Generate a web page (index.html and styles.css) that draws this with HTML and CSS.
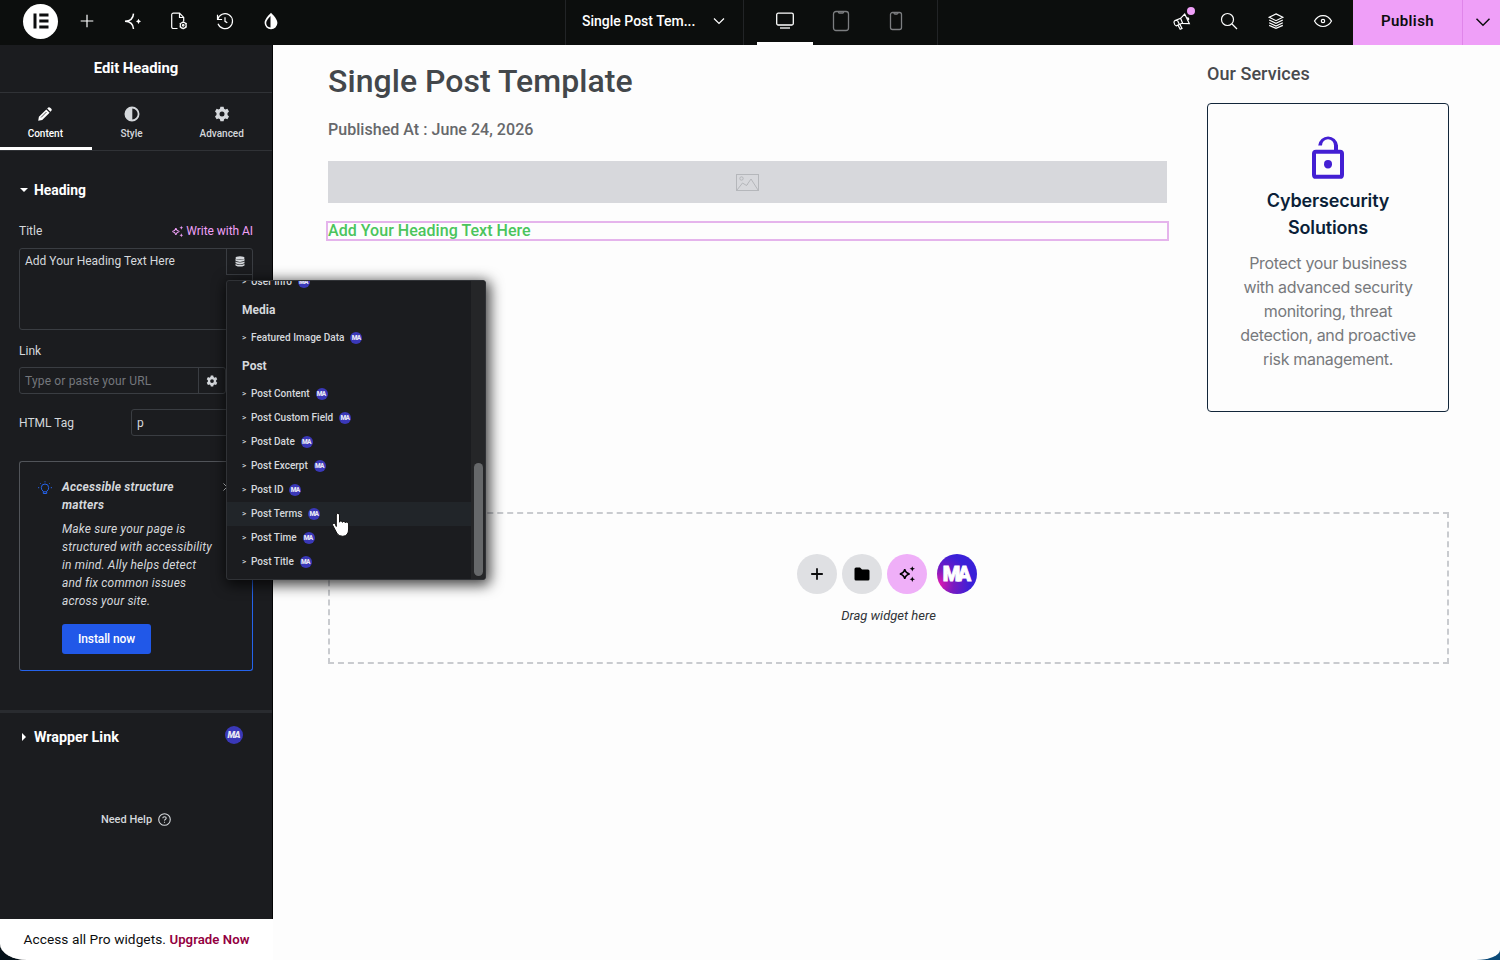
FILE: index.html
```html
<!DOCTYPE html>
<html lang="en">
  <head>
    <meta charset="UTF-8" />
    <meta name="viewport" content="width=device-width, initial-scale=1.0" />
    <title>Single Post Template - Editor</title>
    <link rel="stylesheet" href="styles.css">
  </head>
  <body>
    <div class="app">
      <header class="topbar">
        <div class="tools">
          <div class="logo">
            <svg width="16" height="16" viewBox="0 0 16 16" fill="#0c0d0e"><rect x="0.5" y="0.5" width="3" height="15"/><rect x="6.3" y="0.5" width="9.2" height="3"/><rect x="6.3" y="6.5" width="9.2" height="3"/><rect x="6.3" y="12.5" width="9.2" height="3"/></svg>
          </div>
          <svg class="icon" viewBox="0 0 20 20"><path d="M10 3.7v12.6M3.7 10h12.6"/></svg>
          <svg class="icon" viewBox="0 0 20 20"><path stroke-width="1.5" d="M10.500 2.600C10.300 6.500 8.500 10 2 10.300C8.500 10.600 10.300 14.100 10.500 18"/><path fill="#fff" stroke="none" d="M15.500 7.700l.9 1.700 1.700.9-1.700.9-.9 1.700-.9-1.700-1.700-.9 1.700-.9z"/></svg>
          <svg class="icon" viewBox="0 0 20 20"><path d="M8.500 17.500H4.300a1.600 1.600 0 0 1-1.600-1.600V3.800a1.600 1.600 0 0 1 1.600-1.600h6.200l4.200 4.200v4M10.500 2.500v4h4"/><circle cx="14.200" cy="14.300" r="3"/><circle cx="14.200" cy="14.300" r="0.800"/><path d="M14.200 10.300v1M14.200 17.300v1M10.700 12.300l.9.500M16.800 15.800l.9.500M10.700 16.300l.9-.5M16.800 12.800l.9-.5"/></svg>
          <svg class="icon" viewBox="0 0 20 20"><path d="M2.700 8.500A7.500 7.500 0 1 1 3 12.800M2.500 3.800v4.700h4.600M10 6.300v4l2.300 1.500"/></svg>
          <svg class="icon" viewBox="0 0 20 20"><path fill="#fff" stroke="none" d="M10 1.800c2.800 3 6.400 6.500 6.400 10.200A6.300 6.300 0 0 1 10 18.200 6.300 6.300 0 0 1 3.600 12C3.600 8.300 7.200 4.800 10 1.800z"/><path fill="#0c0d0e" stroke="none" d="M9.500 4.900c-2 2.200-4.300 4.600-4.300 7.100a4.700 4.700 0 0 0 4.300 4.500z"/></svg>
        </div>
        <div class="document-name">
          <span>Single Post Tem...</span>
          <svg class="icon" viewBox="0 0 20 20"><path d="M5 7.500l5 5 5-5"/></svg>
        </div>
        <div class="devices">
          <div class="device active">
            <svg width="20" height="20" viewBox="0 0 20 20"><rect x="1.700" y="2.200" width="16.600" height="11.800" rx="1.500"/><path d="M5 17h10"/></svg>
          </div>
          <div class="device">
            <svg width="20" height="22" viewBox="0 0 20 22"><rect x="2.500" y="1.500" width="15" height="19" rx="2.500"/><path d="M7.500 1.500v.8q0 .7.700.7h3.600q.7 0 .7-.7v-.8"/></svg>
          </div>
          <div class="device">
            <svg width="20" height="20" viewBox="0 0 20 20"><rect x="4.500" y="1.500" width="11" height="17" rx="2"/><path d="M8 1.500q0 1.500 1 1.500h2q1 0 1-1.500"/></svg>
          </div>
        </div>
        <div class="actions">
          <div class="whats-new">
            <svg class="icon" viewBox="0 0 20 20"><path d="M12.700 3.100L17.300 12.600L10 12.300L4.300 14.900Q2.500 14.500 2 11.500Q2 10.200 3 9.600L8.600 7.300ZM8.600 7.300L10.600 12.200M5.200 8.700L7.400 13.600M8 13.400L10 17.500L8.200 18.200L6 14.300M14.700 7q1.800-.3 2 .8q.2 1-1 1.700"/></svg>
            <span class="dot"></span>
          </div>
          <svg class="icon" viewBox="0 0 20 20"><circle cx="8.500" cy="8.500" r="6"/><path d="M13 13l5 5"/></svg>
          <svg class="icon" viewBox="0 0 20 20"><path d="M10 2.900l6.800 3.400L10 9.700 3.200 6.300zM3.200 9l6.800 3.400L16.800 9M3.200 11.700l6.800 3.400 6.800-3.400M3.200 14.400l6.800 3 6.800-3"/></svg>
          <svg class="icon" viewBox="0 0 20 20"><path d="M1.500 10C5.500 2.700 14.500 2.700 18.500 10C14.500 17.300 5.500 17.300 1.500 10z"/><circle cx="10" cy="10" r="1.700"/></svg>
        </div>
        <button class="publish">Publish</button>
        <button class="publish-options"><svg width="20" height="20" viewBox="0 0 20 20"><path d="M3.500 6.800l6.500 6.500 6.500-6.500"/></svg></button>
      </header>

      <div class="workspace">
        <aside class="panel">
          <h1 class="panel-title">Edit Heading</h1>
          <nav class="tabs">
            <div class="tab active">
              <svg width="16" height="16" viewBox="0 0 16 16"><path d="M1.200 14.800l.7-4L9.300 3.400l3.300 3.300-7.400 7.400zM10.200 2.500l1-1q1-.8 2 .2l1.100 1.100q1 1 .1 2l-1 1z"/><path d="M4 11.500l5.500-5.500" stroke="#1c1d20" stroke-width=".8"/></svg>
              <span>Content</span>
            </div>
            <div class="tab tab-style">
              <svg width="16" height="16" viewBox="0 0 16 16"><path fill-rule="evenodd" d="M8 .5a7.500 7.500 0 1 1 0 15 7.500 7.500 0 0 1 0-15zm.3 2.100v10.800a5.400 5.400 0 0 0 0-10.800z"/></svg>
              <span>Style</span>
            </div>
            <div class="tab tab-advanced">
              <svg width="16" height="16" viewBox="0 0 16 16"><use href="#gear"/></svg>
              <span>Advanced</span>
            </div>
          </nav>

          <section class="controls">
            <h2 class="section-title"><i class="caret-down"></i>Heading</h2>
            <div class="row title-row">
              <span>Title</span>
              <a class="ai-link"><svg width="13" height="13" viewBox="0 0 16 16"><use href="#sparkles"/></svg>Write with AI</a>
            </div>
            <div class="textarea">
              <span>Add Your Heading Text Here</span>
              <div class="dynamic">
                <svg width="10" height="11" viewBox="0 0 10 11" fill="#fff"><ellipse cx="5" cy="1.900" rx="4.500" ry="1.700"/><path d="M.5 2.900q4.500 2.200 9 0v1.900q-4.500 2.200-9 0zM.5 5.400q4.500 2.200 9 0v1.900q-4.500 2.200-9 0zM.5 7.900q4.500 2.200 9 0v1.500q-4.500 2.400-9 0z"/></svg>
              </div>
            </div>
            <div class="label">Link</div>
            <div class="url">
              <span class="url-input">Type or paste your URL</span>
              <span class="url-options"><svg width="12" height="12" viewBox="0 0 16 16"><use href="#gear"/></svg></span>
            </div>
            <div class="row tag-row">
              <span>HTML Tag</span>
              <div class="select">p</div>
            </div>
            <div class="notice">
              <svg class="bulb" width="14" height="14" viewBox="0 0 14 14"><path d="M5.300 10.300Q3.300 9 3.300 6.700a3.700 3.700 0 0 1 7.400 0Q10.700 9 8.700 10.300v2.200H5.300zM7 .3v1M2.200 2.200l.7.700M11.800 2.200l-.7.700M0 6.700h1.200M12.800 6.700H14M5.300 10.800h3.400"/></svg>
              <div class="notice-body">
                <h3>Accessible structure matters</h3>
                <p>Make sure your page is structured with accessibility in mind. Ally helps detect and fix common issues across your site.</p>
                <button>Install now</button>
              </div>
              <svg class="close" width="8" height="8" viewBox="0 0 8 8"><path d="M.5.500l7 7M7.500.500l-7 7"/></svg>
            </div>
          </section>

          <section class="wrapper-link">
            <h2 class="section-title"><i class="caret-right"></i>Wrapper Link</h2>
            <span class="badge badge-md">MA</span>
          </section>
          <div class="help">Need Help <svg width="13" height="13" viewBox="0 0 13 13"><circle cx="6.500" cy="6.500" r="5.800"/><path d="M4.800 5.300q0-1.600 1.700-1.600t1.700 1.400q0 .9-.9 1.400t-.8 1.200M6.500 8.700v1"/></svg></div>
          <footer class="upgrade">Access all Pro widgets. <b>Upgrade Now</b></footer>
        </aside>

        <main class="canvas">
          <div class="columns">
            <article class="post">
              <h1>Single Post Template</h1>
              <p class="published">Published At : June 24, 2026</p>
              <div class="placeholder">
                <svg width="23" height="17" viewBox="0 0 23 17"><rect x=".5" y=".5" width="22" height="16"/><circle cx="5.500" cy="4.500" r="1.700"/><path d="M1 16l5.500-7 4 2.500L15 5l7 11M10.500 11.500l1.500-1.500"/></svg>
              </div>
              <p class="selected">Add Your Heading Text Here</p>
            </article>
            <aside class="services">
              <h4>Our Services</h4>
              <div class="service-card">
                <svg width="48" height="50" viewBox="0 0 24 24" preserveAspectRatio="none"><path d="M7.100 6a5 5 0 0 1 9.900 0v2h1a2 2 0 0 1 2 2v10a2 2 0 0 1-2 2H6a2 2 0 0 1-2-2V10a2 2 0 0 1 2-2h9V6a3 3 0 0 0-6 0zM6 10v10h12V10z" fill-rule="evenodd"/><circle cx="12" cy="15" r="2"/></svg>
                <h3>Cybersecurity Solutions</h3>
                <p>Protect your business with advanced security monitoring, threat detection, and proactive risk management.</p>
              </div>
            </aside>
          </div>
          <div class="dropzone">
            <div class="add-buttons">
              <span class="round"><svg width="14" height="14" viewBox="0 0 14 14"><path d="M7 1.200v11.600M1.200 7h11.600" stroke="#0c0d0e" stroke-width="1.800"/></svg></span>
              <span class="round"><svg width="16" height="14" viewBox="0 0 16 14"><path d="M2 .5h4l2 2h6q1.500 0 1.500 1.500v8q0 1.500-1.500 1.500H2Q.5 13.500.5 12V2Q.5.500 2 .5z"/></svg></span>
              <span class="round pink"><svg width="18" height="18" viewBox="0 0 16 16"><use href="#sparkles"/></svg></span>
              <span class="badge badge-lg">MA</span>
            </div>
            <p>Drag widget here</p>
          </div>
        </main>
      </div>

      <div class="dropdown">
        <div class="tag-list">
          <div class="tag">User Info <span class="badge">MA</span></div>
          <h5>Media</h5>
          <div class="tag">Featured Image Data <span class="badge">MA</span></div>
          <h5>Post</h5>
          <div class="tag">Post Content <span class="badge">MA</span></div>
          <div class="tag">Post Custom Field <span class="badge">MA</span></div>
          <div class="tag">Post Date <span class="badge">MA</span></div>
          <div class="tag">Post Excerpt <span class="badge">MA</span></div>
          <div class="tag">Post ID <span class="badge">MA</span></div>
          <div class="tag hover">Post Terms <span class="badge">MA</span></div>
          <div class="tag">Post Time <span class="badge">MA</span></div>
          <div class="tag">Post Title <span class="badge">MA</span></div>
        </div>
        <div class="scrollbar"><div class="thumb"></div></div>
      </div>

      <svg class="cursor" width="22" height="28" viewBox="0 0 22 28"><path d="M6.300 15.500V4q0-1.700 1.500-1.700T9.500 4v7.200q0-1.300 1.400-1.300t1.600 1.500q.2-1 1.400-1t1.500 1.500q.3-.9 1.400-.9 1.700.1 1.800 2v5q0 7-5.800 7.300-4 .2-6-3.200l-4-7.600q-.7-1.400.4-2t2.200.8z"/></svg>
    </div>

    <!-- shared icons -->
    <svg width="0" height="0" class="defs">
      <defs>
        <path id="gear" fill-rule="evenodd" d="M6.400.7h3.200l.5 2.100 1.300.7 2-.7L15 5.600l-1.500 1.500v1.800l1.500 1.500-1.600 2.800-2-.7-1.300.7-.5 2.100H6.400l-.5-2.100-1.300-.7-2 .7L1 10.400l1.500-1.500V7.100L1 5.600l1.600-2.800 2 .7 1.300-.7zM8 5.500a2.500 2.500 0 1 0 0 5 2.500 2.500 0 0 0 0-5z"/>
        <g id="sparkles">
          <path d="M6 3.800q.8 3.400 4.300 4.200Q6.800 8.800 6 12.200 5.200 8.800 1.700 8 5.200 7.200 6 3.800z" fill="none" stroke="currentColor" stroke-width="1.300"/>
          <path d="M12.700 1l.7 1.700 1.700.7-1.700.7-.7 1.700-.7-1.700-1.700-.7 1.700-.7zM12.700 10.200l.7 1.700 1.700.7-1.700.7-.7 1.700-.7-1.700-1.700-.7 1.700-.7z" fill="currentColor"/>
        </g>
      </defs>
    </svg>
  </body>
</html>
```
FILE: styles.css
```css
* {
  box-sizing: border-box;
}
body {
  margin: 0;
  font-family: Roboto, "Liberation Sans", sans-serif;
  font-size: 12px;
  background: linear-gradient(90deg, #06121a 50%, #0b4a78 50%);
}
h1, h2, h3, h4, h5, p {
  margin: 0;
}
button {
  font-family: inherit;
  border: none;
  padding: 0;
}
.app {
  position: relative;
  display: flex;
  flex-direction: column;
  height: 960px;
  overflow: hidden;
  background: #fdfdfd;
  border-radius: 0 0 24px 27px / 0 0 10px 16px;
}
.defs {
  position: absolute;
}

/* top bar */
.topbar {
  display: flex;
  height: 45px;
  flex-shrink: 0;
  background: #0c0e0d;
  padding-bottom: 3px;
  color: #fff;
}
.icon {
  width: 20px;
  height: 20px;
  fill: none;
  stroke: #fff;
  stroke-width: 1.2;
}
.tools {
  display: flex;
  align-items: center;
  width: 565px;
  padding-left: 23px;
}
.tools .icon {
  margin-right: 26px;
}
.logo {
  display: flex;
  align-items: center;
  justify-content: center;
  width: 35px;
  height: 35px;
  margin-right: 19px;
  border-radius: 50%;
  background: #fff;
}
.document-name,
.devices {
  display: flex;
  align-items: center;
  height: 45px;
  padding-bottom: 3px;
  border-left: 1px solid #222426;
}
.document-name {
  width: 178px;
  padding-left: 16px;
  font-size: 14px;
  font-weight: 500;
}
.document-name span {
  width: 127px;
}
.devices {
  width: 195px;
  padding: 0 13px;
  border-right: 1px solid #222426;
}
.device {
  display: flex;
  align-items: center;
  justify-content: center;
  width: 56px;
  height: 45px;
  padding-bottom: 3px;
  border-bottom: 3px solid transparent;
}
.device svg {
  fill: none;
  stroke: #7c7e80;
  stroke-width: 1.3;
  margin-top: 2px;
}
.device.active {
  border-color: #fff;
}
.device.active svg {
  stroke: #fff;
}
.actions {
  display: flex;
  align-items: center;
  gap: 27px;
  margin-left: auto;
  padding-right: 20px;
}
.whats-new {
  position: relative;
  height: 20px;
}
.dot {
  position: absolute;
  top: -4px;
  right: -3px;
  width: 8px;
  height: 8px;
  border-radius: 50%;
  background: #f0a0f8;
}
.publish,
.publish-options {
  height: 45px;
  padding-bottom: 4px;
  background: #ef9ff8;
  color: #0c0d0e;
}
.publish {
  width: 109px;
  font-size: 15px;
  font-weight: 600;
  letter-spacing: 0.4px;
}
.publish-options {
  display: flex;
  align-items: center;
  justify-content: center;
  width: 38px;
  padding: 0 0 2px 3px;
  border-left: 1px solid #e085ea;
}
.publish-options svg {
  fill: none;
  stroke: #0c0d0e;
  stroke-width: 1.5;
}

/* side panel */
.workspace {
  display: flex;
  flex: 1;
}
.panel {
  display: flex;
  flex-direction: column;
  width: 273px;
  background: #1b1c1f;
  border-right: 1px solid #050506;
  color: #d5d8dc;
}
.panel-title {
  height: 48px;
  line-height: 47px;
  border-bottom: 1px solid #303236;
  color: #fff;
  font-size: 14.900px;
  font-weight: 700;
  letter-spacing: -0.050px;
  text-align: center;
}
.tabs {
  display: flex;
  height: 58px;
  border-bottom: 1px solid #303236;
}
.tab {
  display: flex;
  flex-direction: column;
  align-items: center;
  gap: 5px;
  width: 92px;
  padding-top: 13px;
  font-size: 10px;
  font-weight: 500;
  line-height: 14px;
}
.tab svg {
  fill: currentColor;
}
.tab.active {
  border-bottom: 3px solid #fff;
  color: #fff;
  padding-right: 1px;
}
.tab-style {
  width: 80px;
}
.tab-advanced {
  width: 101px;
}
.controls {
  height: 562px;
  padding: 29px 19px 0;
  border-bottom: 3px solid #292b2f;
}
.controls svg {
  fill: currentColor;
}
.section-title {
  display: flex;
  align-items: center;
  height: 20px;
  color: #fff;
  font-size: 13.900px;
  font-weight: 700;
}
.caret-down {
  margin: 0 6px 0 1px;
  border: 4px solid transparent;
  border-top: 4px solid #fff;
  border-bottom: 0;
}
.caret-right {
  margin: 0 8px 0 3px;
  border: 4px solid transparent;
  border-left: 4px solid #fff;
  border-right: 0;
}
.row {
  display: flex;
  align-items: center;
  justify-content: space-between;
}
.title-row {
  height: 16px;
  margin: 23px 0 9px;
}
.ai-link {
  display: flex;
  align-items: center;
  gap: 2px;
  color: #f0a0f8;
  letter-spacing: -0.050px;
}
.textarea {
  display: flex;
  justify-content: space-between;
  height: 82px;
  border: 1px solid #3a3d42;
  border-radius: 3px;
  padding-left: 5px;
  line-height: 24px;
}
.dynamic {
  display: flex;
  align-items: center;
  justify-content: center;
  width: 26px;
  height: 26px;
  border: 1px solid #3a3d42;
  border-width: 0 0 1px 1px;
}
.label {
  height: 16px;
  margin: 13px 0 8px;
  line-height: 16px;
}
.url {
  display: flex;
  width: 207px;
  height: 27px;
  border: 1px solid #3a3d42;
  border-radius: 3px;
}
.url-input {
  width: 178px;
  padding-left: 5px;
  line-height: 27px;
  color: #74777c;
  letter-spacing: 0.16px;
}
.url-options {
  display: flex;
  flex: 1;
  align-items: center;
  justify-content: center;
  border-left: 1px solid #3a3d42;
}
.tag-row {
  margin: 15px 0 25px;
}
.select {
  width: 122px;
  height: 27px;
  padding-left: 5px;
  border: 1px solid #3a3d42;
  border-radius: 3px;
  line-height: 26px;
}
.notice {
  display: flex;
  height: 210px;
  border: 1px solid #515459;
  border-right-color: #2563eb;
  border-bottom-color: #2563eb;
  border-radius: 3px;
  padding: 16px 0 0 18px;
  font-style: italic;
  line-height: 18px;
}
.notice .bulb {
  margin: 3px 10px 0 0;
  fill: none;
  stroke: #2563eb;
}
.notice-body {
  flex-shrink: 0;
  width: 155px;
  letter-spacing: 0.18px;
}
.notice h3 {
  width: 130px;
  margin-bottom: 6px;
  font-size: 12px;
  font-weight: 700;
  letter-spacing: 0.2px;
}
.notice button {
  width: 89px;
  height: 30px;
  margin-top: 14px;
  border-radius: 3px;
  background: #2158e8;
  color: #fff;
  font-size: 12px;
  font-weight: 500;
  letter-spacing: -0.100px;
}
.notice .close {
  margin: 5px 0 0 6px;
  stroke: #d5d8dc;
}
.wrapper-link {
  display: flex;
  align-items: center;
  justify-content: space-between;
  height: 45px;
  padding: 0 29px 0 19px;
}
.wrapper-link .section-title {
  margin-top: 2px;
  font-size: 14.300px;
}
.help {
  display: flex;
  align-items: center;
  justify-content: center;
  gap: 6px;
  padding-top: 54px;
  font-size: 11px;
  font-weight: 500;
}
.help svg {
  fill: none;
  stroke: currentColor;
  stroke-width: 1.100;
  margin-top: 1px;
}
.upgrade {
  height: 41px;
  margin-top: auto;
  margin-right: -1px;
  background: #fff;
  color: #0c0d0e;
  font-size: 13.700px;
  letter-spacing: 0.050px;
  line-height: 41px;
  text-align: center;
}
.upgrade b {
  color: #93003f;
  font-size: 13.200px;
  font-weight: 600;
}

/* MA badges */
.badge {
  display: inline-flex;
  align-items: center;
  justify-content: center;
  width: 12px;
  height: 12px;
  border-radius: 50%;
  background: #3a38b8;
  color: #e8e8f4;
  font-size: 6.500px;
  font-style: normal;
  font-weight: 900;
  letter-spacing: -0.800px;
  padding-right: 1px;
}
.badge-md {
  width: 18px;
  height: 18px;
  margin-bottom: 1px;
  font-size: 9px;
  font-style: italic;
}
.badge-lg {
  width: 40px;
  height: 40px;
  margin-left: 5px;
  background: radial-gradient(circle at 5% 75%, #e01ab0 0, #7a1ac0 30%, #3a20d8 65%);
  color: #fff;
  font-size: 20px;
  letter-spacing: -3px;
  padding-right: 3px;
  -webkit-text-stroke: 0.800px #fff;
}

/* canvas */
.canvas {
  flex: 1;
  padding: 0 51px 0 55px;
}
.columns {
  display: flex;
  justify-content: space-between;
  height: 467px;
}
.post {
  width: 839px;
  padding-top: 16px;
  font-weight: 500;
}
.post h1 {
  color: #43474b;
  font-size: 32px;
  font-weight: 500;
  line-height: 40px;
  letter-spacing: 0.050px;
}
.published {
  margin: 18px 0 21px;
  color: #66686b;
  font-size: 16px;
  line-height: 21px;
  letter-spacing: 0.040px;
}
.placeholder {
  display: flex;
  align-items: center;
  justify-content: center;
  height: 42px;
  background: #d7d8dc;
}
.placeholder svg {
  fill: none;
  stroke: #b5b7bb;
}
.selected {
  margin-top: 20px;
  outline: 2px solid #e5b4ec;
  outline-offset: -0.500px;
  color: #4bc45c;
  font-size: 16px;
  line-height: 16px;
  letter-spacing: 0.040px;
}
.services {
  width: 242px;
  padding-top: 17px;
}
.services h4 {
  color: #484a4e;
  font-size: 18px;
  font-weight: 500;
  line-height: 24px;
  letter-spacing: 0.050px;
}
.service-card {
  height: 309px;
  margin-top: 17px;
  padding: 29px 28px 0;
  border: 1px solid #12263a;
  border-radius: 4px;
  font-family: Inter, "Liberation Sans", sans-serif;
  text-align: center;
}
.service-card svg {
  display: block;
  margin: 0 auto;
  fill: #431fd3;
}
.service-card h3 {
  margin: 4px 0 10px;
  color: #0b1f38;
  font-size: 18px;
  font-weight: 600;
  line-height: 27px;
  letter-spacing: -0.150px;
}
.service-card p {
  color: #77797c;
  font-size: 16px;
  line-height: 24px;
  letter-spacing: -0.320px;
}
.dropzone {
  height: 152px;
  padding-top: 40px;
  border: 2px dashed #c9cbcf;
  text-align: center;
}
.add-buttons {
  display: flex;
  justify-content: center;
  gap: 5px;
  padding-right: 3px;
}
.round {
  display: flex;
  align-items: center;
  justify-content: center;
  width: 40px;
  height: 40px;
  border-radius: 50%;
  background: #dfe0e3;
}
.round.pink {
  background: #efaff8;
}
.dropzone p {
  margin-top: 13px;
  color: #303338;
  font-size: 13px;
  font-style: italic;
  line-height: 18px;
}

/* dynamic tags menu */
.dropdown {
  position: absolute;
  left: 226px;
  top: 280px;
  display: flex;
  width: 260px;
  height: 300px;
  overflow: hidden;
  border: 1px solid #303236;
  border-radius: 3px;
  background: #1b1c1f;
  box-shadow: 2px 3px 14px 2px rgba(0, 0, 0, 0.75);
  color: #d5d8dc;
}
.tag-list {
  display: flex;
  flex-direction: column;
  justify-content: flex-end;
  width: 244px;
  padding-bottom: 5px;
}
.tag-list h5 {
  height: 32px;
  padding-left: 15px;
  font-size: 12px;
  font-weight: 700;
  line-height: 32px;
  flex-shrink: 0;
}
.tag {
  display: flex;
  align-items: center;
  height: 24px;
  flex-shrink: 0;
  padding: 0 0 1px 15px;
  font-size: 10.050px;
  font-weight: 500;
}
.tag::before {
  content: ">";
  width: 9px;
  font-size: 8px;
}
.tag .badge {
  margin: 1px 0 0 6px;
}
.tag.hover {
  background: #212529;
}
.scrollbar {
  flex: 1;
  padding: 182px 2px 3px 3px;
  background: #252628;
}
.thumb {
  height: 113px;
  border-radius: 5px;
  background: #66686a;
}
.cursor {
  position: absolute;
  left: 330px;
  top: 511px;
  fill: #fff;
  stroke: #111;
  stroke-width: 1;
}
```
